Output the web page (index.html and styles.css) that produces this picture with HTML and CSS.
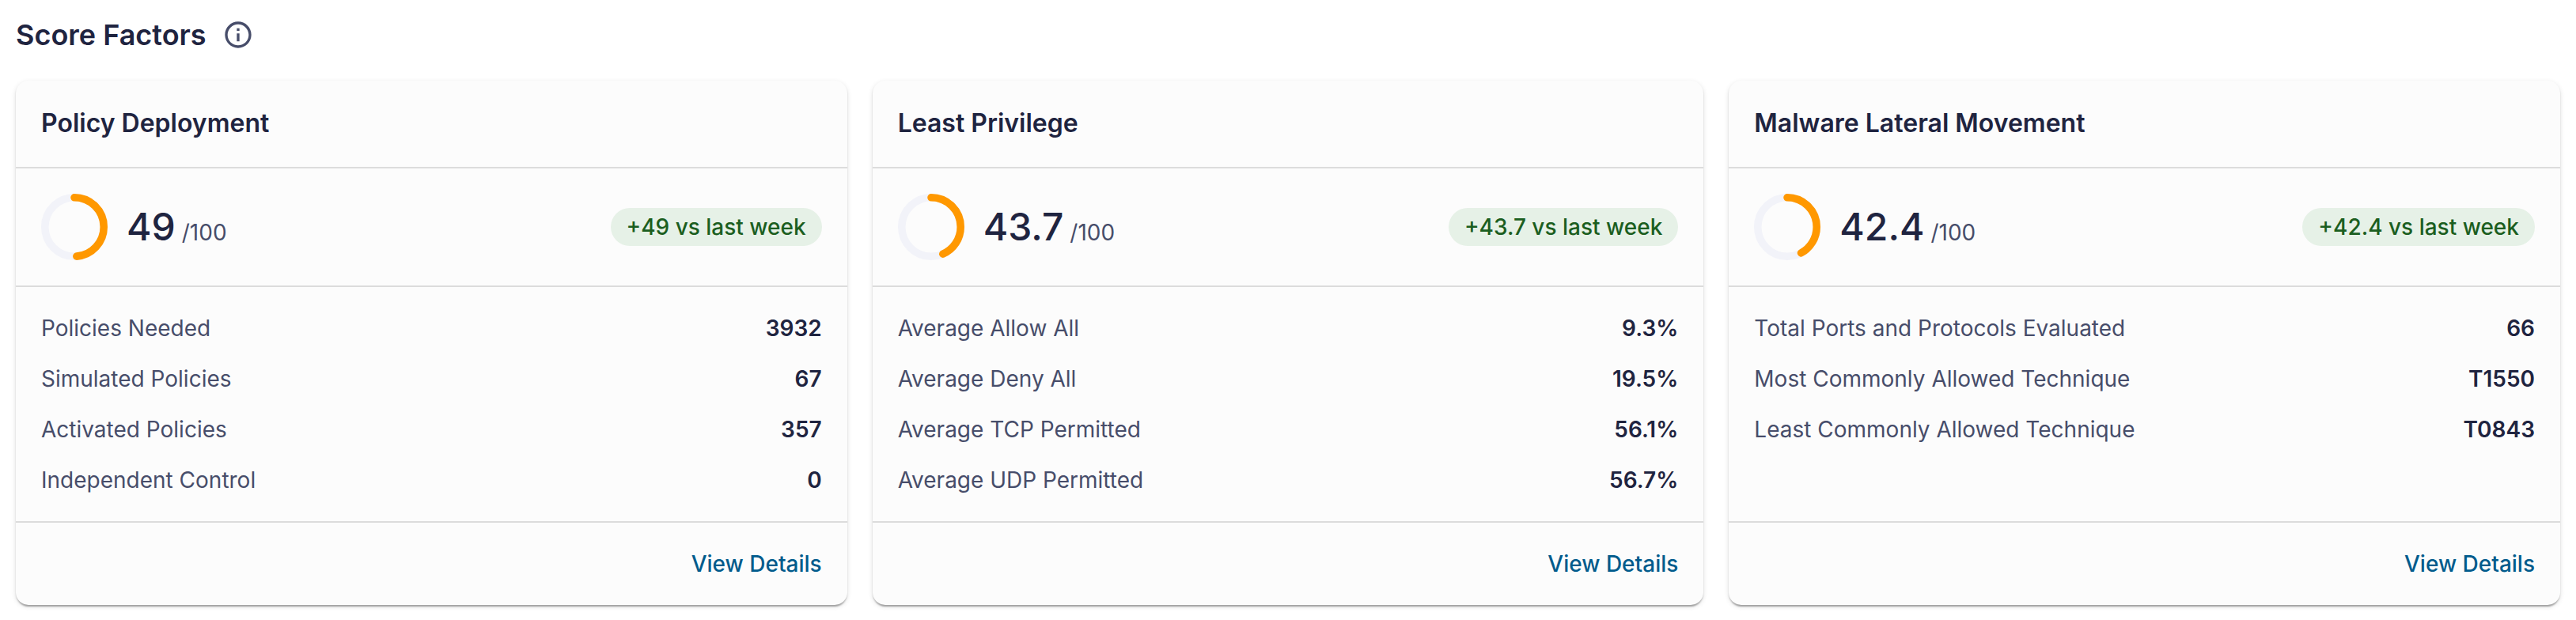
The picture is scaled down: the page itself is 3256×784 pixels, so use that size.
FILE: index.html
```html
<!DOCTYPE html>
<html lang="en">
<head>
<meta charset="utf-8">
<title>Score Factors</title>
<link rel="stylesheet" href="styles.css">
</head>
<body>
<main class="page">
  <header class="page-header">
    <h1 class="page-title">Score Factors</h1>
    <button class="info-button" type="button" aria-label="About score factors">
      <svg class="info-icon" viewBox="0 0 24 24" aria-hidden="true"><path d="M11 7h2v2h-2zm0 4h2v6h-2zm1-9C6.480 2 2 6.480 2 12s4.480 10 10 10 10-4.480 10-10S17.520 2 12 2zm0 18c-4.410 0-8-3.590-8-8s3.590-8 8-8 8 3.590 8 8-3.590 8-8 8z"/></svg>
    </button>
  </header>
  <div class="cards">
    <section class="card">
      <h2 class="card-title">Policy Deployment</h2>
      <div class="score">
        <svg class="ring" viewBox="0 0 44 44" aria-hidden="true">
          <circle class="ring-track" cx="22" cy="22" r="19.500"/>
          <circle class="ring-value" cx="22" cy="22" r="19.500" pathLength="100" stroke-dasharray="49 100"/>
        </svg>
        <p class="score-text"><span class="score-number">49</span><span class="score-total">/100</span></p>
        <span class="chip">+49 vs last week</span>
      </div>
      <dl class="facts">
        <div class="fact"><dt>Policies Needed</dt><dd>3932</dd></div>
        <div class="fact"><dt>Simulated Policies</dt><dd>67</dd></div>
        <div class="fact"><dt>Activated Policies</dt><dd>357</dd></div>
        <div class="fact"><dt>Independent Control</dt><dd>0</dd></div>
      </dl>
      <footer class="card-footer"><a class="details-link" href="#">View Details</a></footer>
    </section>
    <section class="card">
      <h2 class="card-title">Least Privilege</h2>
      <div class="score">
        <svg class="ring" viewBox="0 0 44 44" aria-hidden="true">
          <circle class="ring-track" cx="22" cy="22" r="19.500"/>
          <circle class="ring-value" cx="22" cy="22" r="19.500" pathLength="100" stroke-dasharray="43.700 100"/>
        </svg>
        <p class="score-text"><span class="score-number">43.7</span><span class="score-total">/100</span></p>
        <span class="chip">+43.7 vs last week</span>
      </div>
      <dl class="facts">
        <div class="fact"><dt>Average Allow All</dt><dd>9.3%</dd></div>
        <div class="fact"><dt>Average Deny All</dt><dd>19.5%</dd></div>
        <div class="fact"><dt>Average TCP Permitted</dt><dd>56.1%</dd></div>
        <div class="fact"><dt>Average UDP Permitted</dt><dd>56.7%</dd></div>
      </dl>
      <footer class="card-footer"><a class="details-link" href="#">View Details</a></footer>
    </section>
    <section class="card">
      <h2 class="card-title">Malware Lateral Movement</h2>
      <div class="score">
        <svg class="ring" viewBox="0 0 44 44" aria-hidden="true">
          <circle class="ring-track" cx="22" cy="22" r="19.500"/>
          <circle class="ring-value" cx="22" cy="22" r="19.500" pathLength="100" stroke-dasharray="42.400 100"/>
        </svg>
        <p class="score-text"><span class="score-number">42.4</span><span class="score-total">/100</span></p>
        <span class="chip">+42.4 vs last week</span>
      </div>
      <dl class="facts">
        <div class="fact"><dt>Total Ports and Protocols Evaluated</dt><dd>66</dd></div>
        <div class="fact"><dt>Most Commonly Allowed Technique</dt><dd>T1550</dd></div>
        <div class="fact"><dt>Least Commonly Allowed Technique</dt><dd>T0843</dd></div>
      </dl>
      <footer class="card-footer"><a class="details-link" href="#">View Details</a></footer>
    </section>
  </div>
</main>
</body>
</html>
```
FILE: styles.css
```css
* {
  box-sizing: border-box;
}

body {
  margin: 0;
  background: #fff;
  color: #1f2440;
  font-family: Inter, "Liberation Sans", sans-serif;
  font-size: 28px;
  line-height: 40px;
}

h1, h2, p, dl, dd {
  margin: 0;
}

.page {
  padding: 20px;
}

.page-header {
  display: flex;
  align-items: center;
  gap: 20px;
  margin-bottom: 34px;
}

.page-title {
  font-size: 36px;
  font-weight: 600;
  line-height: 48px;
}

.info-button {
  display: flex;
  padding: 0;
  border: 0;
  background: none;
  color: #474d6a;
  cursor: pointer;
}

.info-icon {
  width: 40px;
  height: 40px;
  fill: currentColor;
}

.cards {
  display: grid;
  grid-template-columns: repeat(3, 1fr);
  gap: 32px;
}

.card {
  display: flex;
  flex-direction: column;
  border-radius: 16px;
  background: #fcfcfc;
  box-shadow:
    0 4px 2px -2px rgba(0, 0, 0, 0.2),
    0 2px 2px 0 rgba(0, 0, 0, 0.14),
    0 2px 6px 0 rgba(0, 0, 0, 0.12);
}

.card-title {
  padding: 34px 32px 35px;
  border-bottom: 2px solid #dcdcdc;
  font-size: 32px;
  font-weight: 600;
  line-height: 40px;
}

.score {
  display: flex;
  align-items: center;
  padding: 32px;
  border-bottom: 2px solid #dcdcdc;
}

.ring {
  width: 84px;
  height: 84px;
  margin-right: 24px;
  fill: none;
  stroke-width: 5;
  transform: rotate(-90deg);
}

.ring-track {
  stroke: #f2f3f9;
}

.ring-value {
  stroke: #ff9800;
  stroke-linecap: round;
}

.score-text {
  display: flex;
  align-items: baseline;
  gap: 8px;
}

.score-number {
  font-size: 48px;
  font-weight: 500;
  line-height: 64px;
}

.score-total {
  color: #474d6a;
}

.chip {
  margin-left: auto;
  padding: 4px 20px;
  border-radius: 24px;
  background: #e6f1e7;
  color: #1b5e20;
  font-weight: 500;
}

.facts {
  flex: 1;
  padding: 20px 32px;
}

.fact {
  display: flex;
  justify-content: space-between;
  padding: 12px 0;
}

.fact dt {
  color: #474d6a;
}

.fact dd {
  font-weight: 600;
}

.card-footer {
  display: flex;
  justify-content: flex-end;
  padding: 32px;
  border-top: 2px solid #dcdcdc;
}

.details-link {
  color: #005b8c;
  font-weight: 500;
  text-decoration: none;
}
```
